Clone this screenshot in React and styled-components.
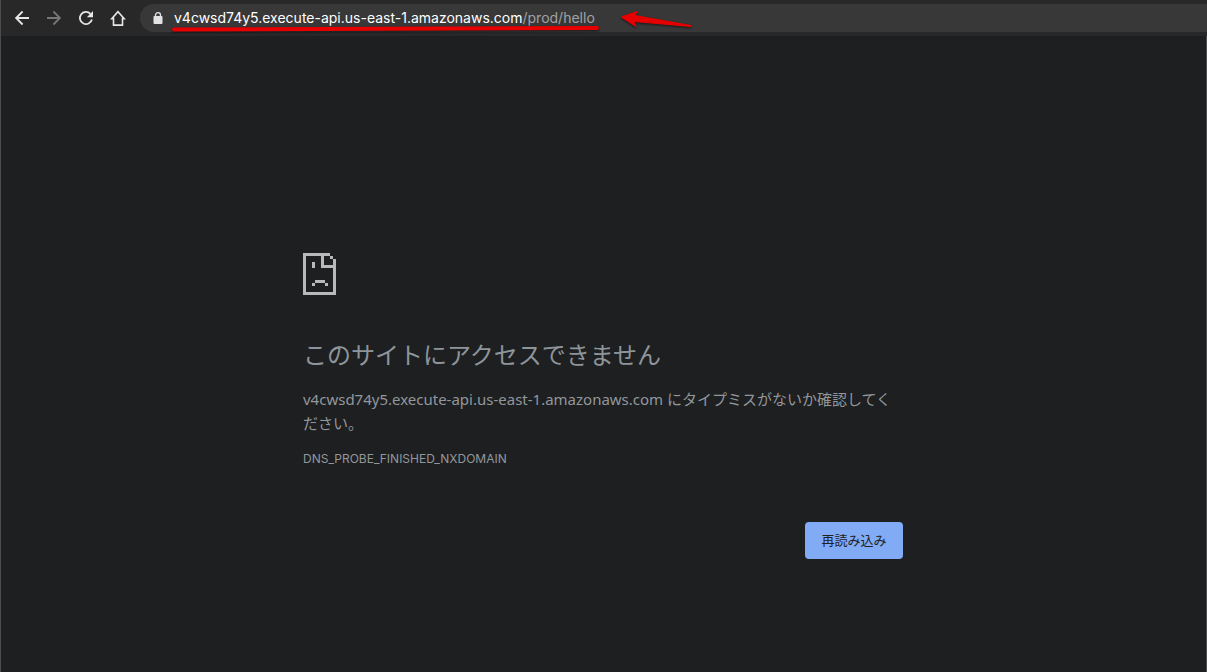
import React from "react";
import styled, { createGlobalStyle } from "styled-components";

const GlobalStyle = createGlobalStyle`
  *, *::before, *::after { box-sizing: border-box; }
  body {
    margin: 0;
    background: #1e1f21;
    font-family: Inter, "Noto Sans CJK JP", sans-serif;
  }
`;

const Window = styled.div`
  display: flex;
  flex-direction: column;
  min-height: 100vh;
  border-left: 1px solid #4b4c4d;
`;

const Toolbar = styled.header`
  display: flex;
  align-items: center;
  height: 36px;
  padding-left: 5px;
  background: #282828;
`;

const NavButton = styled.button`
  display: flex;
  align-items: center;
  justify-content: center;
  width: 32px;
  height: 28px;
  padding: 0;
  border: 0;
  background: transparent;
  color: ${(p) => (p.disabled ? "#777777" : "#e6e6e6")};
`;

const AddressBar = styled.div`
  position: relative;
  display: flex;
  flex: 1;
  align-items: center;
  gap: 11px;
  height: 28px;
  margin-left: 6px;
  padding-left: 13px;
  border-radius: 14px 0 0 14px;
  background: #383838;
`;

const Url = styled.a`
  color: #a2a2a2;
  font-family: Inter, sans-serif;
  font-size: 14px;
  line-height: 20px;
  text-decoration: none;
  white-space: nowrap;
`;

const Host = styled.span`
  color: #ffffff;
`;

const Markup = styled.svg`
  position: absolute;
  top: 4px;
  left: 30px;
  filter: drop-shadow(0 1px 1px rgba(0, 0, 0, 0.6));
  pointer-events: none;
`;

const Page = styled.main`
  flex: 1;
  padding: 217px 25px 40px 24px;
  border-right: 1px solid #4b4c4d;
`;

const ErrorPanel = styled.section`
  max-width: 600px;
  margin: 0 auto;
  color: #92979c;
`;

const SadIcon = styled.svg`
  display: block;
  color: #b9b9b9;
`;

const Title = styled.h1`
  margin: 43px 0 13px;
  color: #8d959b;
  font-size: 24px;
  font-weight: 400;
  line-height: 36px;
`;

const Message = styled.p`
  margin: 0;
  font-family: "Noto Sans", "Noto Sans CJK JP", sans-serif;
  font-size: 15px;
  line-height: 24px;
`;

const ErrorCode = styled.p`
  margin: 14px 0 0;
  font-size: 12px;
  line-height: 20px;
`;

const Actions = styled.div`
  display: flex;
  justify-content: flex-end;
  margin-top: 53px;
`;

const ReloadButton = styled.button`
  min-width: 98px;
  height: 37px;
  padding: 0 16px 2px;
  border: 0;
  border-radius: 4px;
  background: #81abf5;
  color: #202124;
  font-family: "Noto Sans CJK JP", sans-serif;
  font-size: 13px;
  line-height: 20px;
`;

const Glyph = ({ children }) => (
  <svg width="16" height="16" viewBox="0 0 16 16" fill="none" stroke="currentColor" strokeWidth="1.8" aria-hidden="true">
    {children}
  </svg>
);

export default function App() {
  return (
    <>
      <GlobalStyle />
      <Window>
        <Toolbar>
          <NavButton aria-label="戻る">
            <Glyph><path d="M15 8H2.5M8.6 1.5L2.1 8l6.5 6.5" /></Glyph>
          </NavButton>
          <NavButton aria-label="進む" disabled>
            <Glyph><path d="M1 8h12.5M7.4 1.5L13.9 8l-6.5 6.5" /></Glyph>
          </NavButton>
          <NavButton aria-label="再読み込み">
            <Glyph>
              <path d="M13.9 9.5A6.1 6.1 0 1 1 12.4 3.8" />
              <path d="M15 1v6.2H8.8z" fill="currentColor" stroke="none" />
            </Glyph>
          </NavButton>
          <NavButton aria-label="ホーム">
            <Glyph><path d="M8 1.6L1.8 8.6H3.5V15.1h9V8.6h1.7z" strokeWidth="1.6" /></Glyph>
          </NavButton>
          <AddressBar>
            <svg width="10" height="12" viewBox="0 0 10 12" aria-hidden="true">
              <path d="M2.5 5V3.2a2.5 2.5 0 0 1 5 0V5" fill="none" stroke="#e3e3e3" strokeWidth="1.3" />
              <rect x="0.5" y="4" width="9" height="8" rx="1" fill="#e3e3e3" />
            </svg>
            <Url href="#">
              <Host>v4cwsd74y5.execute-api.us-east-1.amazonaws.com</Host>/prod/hello
            </Url>
            <Markup width="530" height="26" viewBox="0 0 530 26" aria-hidden="true">
              <path d="M4 21.5L427 20" stroke="#e60000" strokeWidth="4" strokeLinecap="round" />
              <path d="M451 9L467 3.5L465 7.5L521 17.5V18.5L464 13.5L466 18.5z" fill="#e60000" stroke="#e60000" strokeLinejoin="round" />
            </Markup>
          </AddressBar>
        </Toolbar>
        <Page>
          <ErrorPanel>
            <SadIcon width="33" height="42" viewBox="0 0 33 42" fill="currentColor" shapeRendering="crispEdges" aria-hidden="true">
              <path d="M0 0h27v3h-6v9h9v-6h3v36h-33zM3 3v36h27v-24h-12v-12zM27 3h3v3h-3zM9 9h3v6h-3zM12 27h10v3h-10zM9 30h3v3h-3zM22 30h3v3h-3z" fillRule="evenodd" />
            </SadIcon>
            <Title>このサイトにアクセスできません</Title>
            <Message>
              v4cwsd74y5.execute-api.us-east-1.amazonaws.com にタイプミスがないか確認してください。
            </Message>
            <ErrorCode>DNS_PROBE_FINISHED_NXDOMAIN</ErrorCode>
            <Actions>
              <ReloadButton type="button">再読み込み</ReloadButton>
            </Actions>
          </ErrorPanel>
        </Page>
      </Window>
    </>
  );
}
